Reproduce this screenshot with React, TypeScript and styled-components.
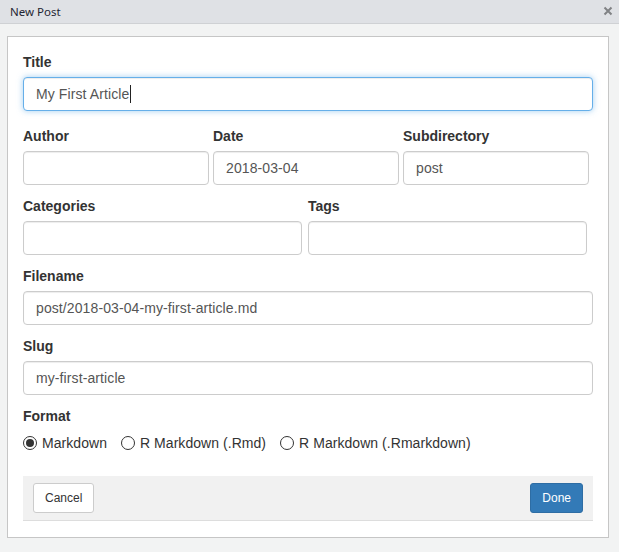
import React from "react";
import styled, { createGlobalStyle, css } from "styled-components";

const GlobalStyle = createGlobalStyle`
  html, body {
    margin: 0;
    padding: 0;
    background: #f2f3f3;
    font-family: "Liberation Sans", Arial, sans-serif;
  }
  * { box-sizing: border-box; }
`;

const Window = styled.div`
  width: 619px;
  height: 552px;
  background: #f2f3f3;
  display: flex;
  flex-direction: column;
`;

const TitleBar = styled.div`
  height: 24px;
  background: #dfe1e5;
  border-bottom: 1px solid #cfd1d4;
  display: flex;
  align-items: center;
  justify-content: space-between;
  padding: 0 6px 0 10px;
`;

const TitleText = styled.span`
  font-family: "Noto Sans", "Open Sans", sans-serif;
  font-size: 11.5px;
  color: #1f2633;
`;

const CloseButton = styled.span`
  display: flex;
  width: 10px;
  height: 10px;
  margin-top: -1px;
`;

const Content = styled.div`
  padding: 12px 10px 0 7px;
`;

const Panel = styled.div`
  width: 602px;
  background: #ffffff;
  border: 1px solid #c6c6c6;
  padding: 15px 15px 16px 15px;
`;

const FormGroup = styled.div<{ $mb?: number }>`
  display: flex;
  flex-direction: column;
  margin-bottom: ${(p) => (p.$mb ?? 11)}px;
`;

const Row = styled.div<{ $cols: string; $gap: number }>`
  display: grid;
  grid-template-columns: ${(p) => p.$cols};
  column-gap: ${(p) => p.$gap}px;
`;

const Label = styled.label`
  display: block;
  font-size: 14px;
  line-height: 20px;
  font-weight: 700;
  color: #333333;
  margin-bottom: 5px;
`;

const TextInput = styled.input<{ $focused?: boolean }>`
  display: block;
  width: 100%;
  height: 34px;
  padding: 6px 12px;
  font-family: "Liberation Sans", Arial, sans-serif;
  font-size: 14px;
  letter-spacing: 0.1px;
  line-height: 20px;
  color: #555555;
  background: #ffffff;
  border: 1px solid #cccccc;
  border-radius: 4px;
  box-shadow: inset 0 1px 1px rgba(0, 0, 0, 0.075);
  outline: none;
  ${(p) =>
    p.$focused &&
    css`
      border-color: #66afe9;
      box-shadow: inset 0 1px 1px rgba(0, 0, 0, 0.075),
        0 0 6px rgba(102, 175, 233, 0.6);
    `}
`;

const InputWrap = styled.div`
  position: relative;
`;

const Caret = styled.span`
  position: absolute;
  left: 107px;
  top: 8px;
  width: 1px;
  height: 18px;
  background: #222;
`;

const RadioGroup = styled.div`
  display: flex;
  align-items: center;
  height: 24px;
  gap: 14px;
`;

const RadioOption = styled.label`
  display: flex;
  align-items: center;
  gap: 5px;
  font-size: 14px;
  letter-spacing: 0.05px;
  color: #333333;
`;

const RadioCircle = styled.span<{ $checked?: boolean }>`
  width: 14px;
  height: 14px;
  border-radius: 50%;
  border: 1px solid #333333;
  background: #ffffff;
  display: flex;
  align-items: center;
  justify-content: center;
  &::after {
    content: "";
    width: 8px;
    height: 8px;
    border-radius: 50%;
    background: ${(p) => (p.$checked ? "#333333" : "transparent")};
  }
`;

const Footer = styled.div`
  margin-top: 21px;
  background: #f1f1f1;
  border-bottom: 1px solid #dddddd;
  padding: 7px 10px;
  display: flex;
  justify-content: space-between;
  align-items: center;
`;

const Button = styled.button<{ $primary?: boolean }>`
  height: 30px;
  padding: 5px 11px;
  font-family: "Liberation Sans", Arial, sans-serif;
  font-size: 12px;
  line-height: 18px;
  border-radius: 3px;
  cursor: pointer;
  border: 1px solid ${(p) => (p.$primary ? "#2e6da4" : "#cccccc")};
  background: ${(p) => (p.$primary ? "#337ab7" : "#ffffff")};
  color: ${(p) => (p.$primary ? "#ffffff" : "#333333")};
`;

const Field = ({ label, value, focused, mb }: { label: string; value?: string; focused?: boolean; mb?: number }) => (
  <FormGroup $mb={mb}>
    <Label>{label}</Label>
    <TextInput $focused={focused} defaultValue={value ?? ""} readOnly />
  </FormGroup>
);

export default function App() {
  return (
    <>
      <GlobalStyle />
      <Window>
        <TitleBar>
          <TitleText>New Post</TitleText>
          <CloseButton>
            <svg width="10" height="10" viewBox="0 0 10 10">
              <path d="M1.5 1.5 L8.5 8.5 M8.5 1.5 L1.5 8.5" stroke="#808285" strokeWidth="2" />
            </svg>
          </CloseButton>
        </TitleBar>
        <Content>
          <Panel>
            <FormGroup $mb={15}>
              <Label>Title</Label>
              <InputWrap>
                <TextInput $focused defaultValue="My First Article" readOnly />
                <Caret />
              </InputWrap>
            </FormGroup>
            <Row $cols="186px 186px 186px" $gap={4}>
              <Field label="Author" />
              <Field label="Date" value="2018-03-04" />
              <Field label="Subdirectory" value="post" />
            </Row>
            <Row $cols="279px 279px" $gap={6}>
              <Field label="Categories" />
              <Field label="Tags" />
            </Row>
            <Field label="Filename" value="post/2018-03-04-my-first-article.md" />
            <Field label="Slug" value="my-first-article" />
            <FormGroup $mb={0}>
              <Label>Format</Label>
              <RadioGroup>
                <RadioOption>
                  <RadioCircle $checked />
                  Markdown
                </RadioOption>
                <RadioOption>
                  <RadioCircle />
                  R Markdown (.Rmd)
                </RadioOption>
                <RadioOption>
                  <RadioCircle />
                  R Markdown (.Rmarkdown)
                </RadioOption>
              </RadioGroup>
            </FormGroup>
            <Footer>
              <Button>Cancel</Button>
              <Button $primary>Done</Button>
            </Footer>
          </Panel>
        </Content>
      </Window>
    </>
  );
}
